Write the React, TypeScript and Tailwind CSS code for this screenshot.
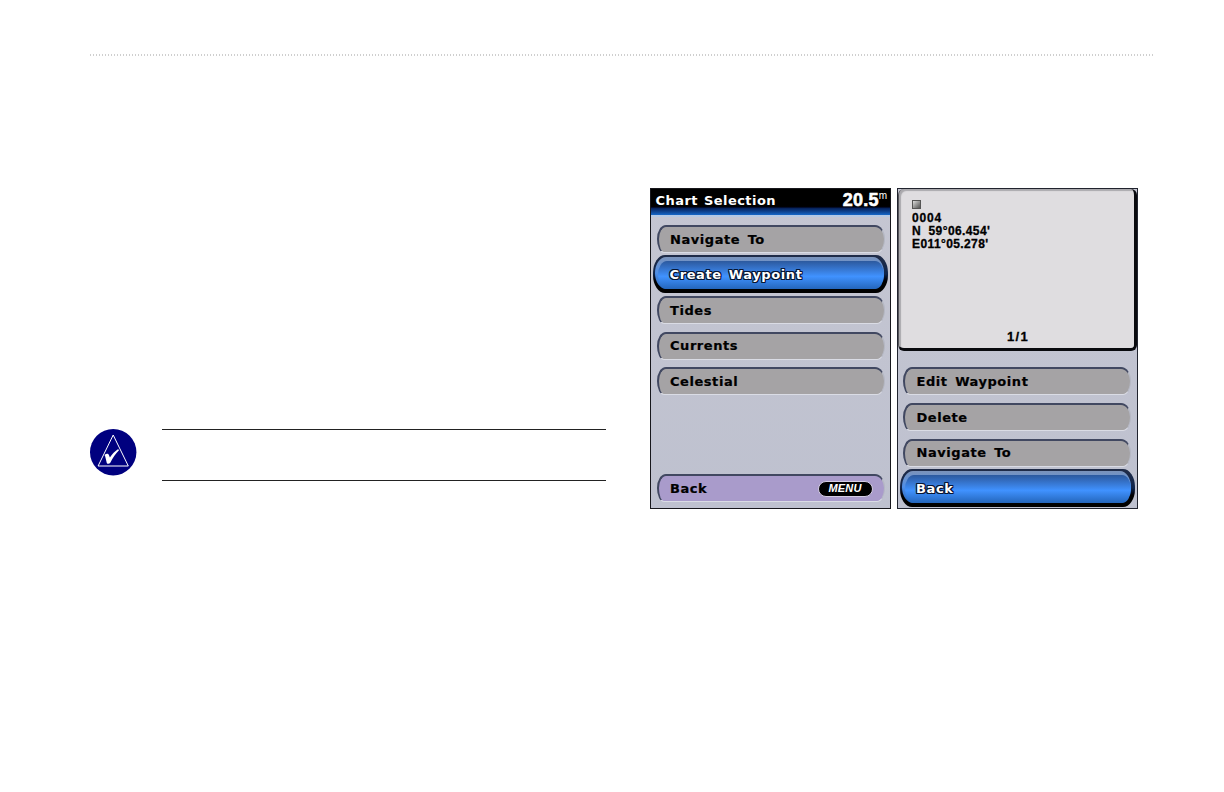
import clsx from "clsx";

const chartItems = ["Navigate To", "Create Waypoint", "Tides", "Currents", "Celestial"];
const waypointItems = ["Edit Waypoint", "Delete", "Navigate To", "Back"];

function SoftKey({
  label,
  selected,
  menu,
}: {
  label: string;
  selected?: boolean;
  menu?: boolean;
}) {
  if (selected) {
    return (
      <div className="flex h-[35.6px] items-center justify-center">
        <button className="flex h-[38px] w-[235px] shrink-0 rounded-[12px/18px] bg-linear-to-b from-[#202c48] via-[#10254c] to-black to-75% pt-[2px] pr-[4px] pb-[4px] pl-[2px]">
          <span className="flex h-full w-full rounded-[11px/16px] bg-linear-to-b from-[#7b93ba] via-[#4f8fe8] to-[#2466bc] pt-[4px] pl-[3px]">
            <span className="flex h-full w-full items-center rounded-[9px/14px] bg-linear-to-b from-[#2c599e] via-[#4092ff] via-55% to-[#2466bc] pb-[1px] pl-[11.5px] text-[13px] tracking-[0.6px] text-white [word-spacing:2px] [text-shadow:1px_0_#061533,-1px_0_#061533,0_1px_#061533,0_-1px_#061533,1px_1px_#061533,-1px_-1px_#061533,1px_-1px_#061533,-1px_1px_#061533]">
              {label}
            </span>
          </span>
        </button>
      </div>
    );
  }
  return (
    <div className="flex h-[35.6px] items-center justify-center">
      <button
        className={clsx(
          "flex h-[28px] w-[228px] items-center justify-between rounded-tl-[9px_14px] rounded-tr-[10px_14px] rounded-br-[8px_14px] rounded-bl-[7px_14px] border-t-2 border-r border-b border-l-2 border-t-[#414861] border-r-[#b5b8c4] border-b-[#dadce5] border-l-[#414861] pr-[11px] pl-[11.5px] text-[13px] tracking-[0.55px] text-black [word-spacing:2.5px] [-webkit-text-stroke:0.2px_black]",
          menu ? "bg-[#a99bcb]" : "bg-[#a5a3a5]",
        )}
      >
        {label}
        {menu && (
          <span className="flex h-[16px] w-[55px] items-center justify-center rounded-full border border-[#d4cde3] bg-black font-['Liberation_Sans',sans-serif] text-[11px] leading-none tracking-[0.2px] text-white italic [-webkit-text-stroke:0]">
            MENU
          </span>
        )}
      </button>
    </div>
  );
}

function ChartSelection() {
  return (
    <section className="flex h-[321px] w-[241px] flex-col border border-[#17171c] bg-linear-to-b from-[#c5c6d2] to-[#bec1cf]">
      <header className="flex h-[28px] shrink-0 justify-between border-b-2 border-[#b5c9e5] bg-linear-to-b from-black from-65% via-[#07245f] via-75% to-[#1768c9] pr-[3px] pl-[4.5px] text-white">
        <h1 className="text-[13px] leading-[23px] tracking-[0.45px] [word-spacing:1px]">Chart Selection</h1>
        <div className="flex font-['Liberation_Sans',sans-serif]">
          <span className="text-[18px] leading-[22px] tracking-[0.2px] [-webkit-text-stroke:0.6px_white]">20.5</span>
          <span className="text-[10px] leading-[13px] font-normal">m</span>
        </div>
      </header>
      <div className="flex grow flex-col pt-[4px]">
        {chartItems.map((item) => (
          <SoftKey key={item} label={item} selected={item === "Create Waypoint"} />
        ))}
        <div className="mt-auto pb-[2px]">
          <SoftKey label="Back" menu />
        </div>
      </div>
    </section>
  );
}

function WaypointReview() {
  return (
    <section className="flex h-[321px] w-[241px] flex-col border border-[#20232e] bg-linear-to-b from-[#c5c6d2] to-[#bec1cf]">
      <div className="flex h-[162px] shrink-0 flex-col rounded-[6px] border-r-[3px] border-b-[3px] border-l border-[#090a0e] border-l-[#545459] bg-[#dfdde0] pt-[11px] pl-[13px] font-['Liberation_Sans',sans-serif] text-[12px] leading-[13px] text-black shadow-[inset_2px_2px_1px_#aaa9ad] [-webkit-text-stroke:0.3px_black]">
        <span className="mb-[3px] h-[9px] w-[9px] border border-[#555] bg-linear-to-br from-[#ddd] to-[#555]" />
        <p className="tracking-[0.8px]">0004</p>
        <p className="tracking-[0.4px] whitespace-pre">N  59°06.454'</p>
        <p className="tracking-[0.4px]">E011°05.278'</p>
        <p className="mt-auto mb-[5px] pr-[10px] text-center text-[13px] tracking-[1.3px]">1/1</p>
      </div>
      {/* keys sit half a pixel left of centre on this page */}
      <div className="mt-auto flex flex-col pr-[1px] pb-[2.1px]">
        {waypointItems.map((item) => (
          <SoftKey key={item} label={item} selected={item === "Back"} />
        ))}
      </div>
    </section>
  );
}

function NoteIcon() {
  return (
    <svg className="h-[48px] w-[48px]" viewBox="0 0 48 48">
      <circle cx="23.2" cy="23.2" r="23.2" fill="#00007f" />
      <path d="M23.2 6 38.3 37H8.1Z" fill="none" stroke="#fff" strokeWidth="1" />
      <path
        d="M14.5 26c1.7-1.6 3.9-1.4 4.4 0l1 2.6c2.4-3.6 4.9-6.3 8-8.3l1.3.8c-3.8 3.9-6.5 7.9-8.9 12.7-.9 1.3-3 1.4-3.5.1l-1.4-5.7c-.2-.8-.4-1.4-.9-2.2Z"
        fill="#fff"
      />
    </svg>
  );
}

export default function App() {
  return (
    <main className="flex h-[792px] w-[1224px] flex-col bg-white pl-[90px] font-['DejaVu_Sans',sans-serif] font-bold">
      <div className="mt-[54px] h-[2px] w-[1063px] shrink-0 bg-[repeating-linear-gradient(to_right,#cfcfcf_0_1px,#fff_1px_3px)]" />
      <div className="mt-[132px] flex">
        <div className="mt-[241px] flex h-[52px] w-[560px] gap-[24px]">
          <NoteIcon />
          <div className="h-[52px] w-[444px] border-y border-[#222]" />
        </div>
        <div className="flex gap-[6px]">
          <ChartSelection />
          <WaypointReview />
        </div>
      </div>
    </main>
  );
}
